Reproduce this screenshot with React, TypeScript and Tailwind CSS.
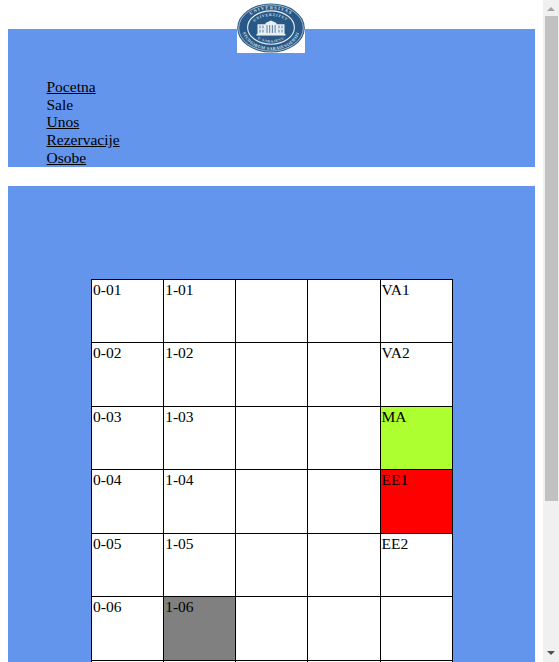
const links = [
  { label: "Pocetna", linked: true },
  { label: "Sale", linked: false },
  { label: "Unos", linked: true },
  { label: "Rezervacije", linked: true },
  { label: "Osobe", linked: true },
];

const rooms = [
  ["0-01", "1-01", "", "", "VA1"],
  ["0-02", "1-02", "", "", "VA2"],
  ["0-03", "1-03", "", "", "MA"],
  ["0-04", "1-04", "", "", "EE1"],
  ["0-05", "1-05", "", "", "EE2"],
  ["0-06", "1-06", "", "", ""],
  ["", "", "", "", ""],
];

const fills: Record<string, string> = {
  MA: "bg-[#adff2f]",
  EE1: "bg-[#ff0000]",
  "1-06": "bg-[#808080]",
};

function Logo() {
  return (
    <svg className="block h-[50px] w-[68px] bg-white" viewBox="0 0 68 51" preserveAspectRatio="none">
      <ellipse cx="34" cy="25.5" rx="33.8" ry="25" fill="#285887" />
      <ellipse cx="34" cy="25.5" rx="32.3" ry="23.6" fill="none" stroke="#dce6ef" strokeWidth="0.7" />
      <ellipse cx="34" cy="25" rx="23.4" ry="17" fill="#285887" stroke="#e8eef4" strokeWidth="1.1" />
      <defs>
        <path id="outerTop" d="M12 13.5 C22 4 46 4 56 13.5" />
        <path id="outerBottom" d="M5 27 C9 55 59 55 63 27" />
        <path id="innerTop" d="M16.5 21 C22 10.8 46 10.8 51.5 21" />
        <path id="innerBottom" d="M19 35 C27 42 41 42 49 35" />
      </defs>
      <g fill="#d5e0ea" fontFamily="Liberation Serif, serif" fontWeight="bold">
        <text fontSize="4.6"><textPath href="#outerTop" startOffset="2" textLength="42">UNIVERSITAS</textPath></text>
        <text fontSize="4.4"><textPath href="#outerBottom" startOffset="3" textLength="71">STUDIORUM SARAIEVOENSIS</textPath></text>
        <text fontSize="3.8"><textPath href="#innerTop" startOffset="2" textLength="34">UNIVERZITET</textPath></text>
        <text fontSize="3.6"><textPath href="#innerBottom" startOffset="2" textLength="28">U SARAJEVU</textPath></text>
      </g>
      <g fill="#e8eff5">
        <path d="M28.5 20.5 34 17.8l5.5 2.7v1.2h8v10.5h-27V21.7h8z" />
        <path d="M19.5 31.5h29v1.7h-29z" />
      </g>
      <path d="M23 23v2.6m3-2.6v2.6m16-2.6v2.6m3-2.6v2.6M23 27.5v2.6m3-2.6v2.6m16-2.6v2.6m3-2.6v2.6M30 22.5v8m2.7-8v8m2.7-8v8m2.7-8v8" stroke="#55799f" strokeWidth="1" />
      <path d="M21 26.5h7m12 0h7" stroke="#b3c7da" strokeWidth="0.6" />
    </svg>
  );
}

function Scrollbar() {
  return (
    <div className="flex h-full w-4 shrink-0 flex-col items-center bg-[#f0f0f0]">
      <svg className="block h-4 w-4 shrink-0" viewBox="0 0 16 16">
        <path d="M4 11 8 7l4 4z" fill="#a3a3a3" />
      </svg>
      <div className="h-[485px] w-[13px] shrink-0 bg-[#c1c1c1]" />
      <div className="grow" />
      <svg className="block h-4 w-4 shrink-0" viewBox="0 0 16 16">
        <path d="M4 5h8L8 9z" fill="#505050" />
      </svg>
    </div>
  );
}

export default function App() {
  return (
    <div className="flex h-[662px] w-[559px] overflow-hidden bg-white font-['Liberation_Serif','Times_New_Roman',serif] text-[15.5px] leading-[17.8px] text-black">
      <main className="flex h-full w-[543px] shrink-0 flex-col px-2">
        <header className="mt-[29px] h-[138px] shrink-0 bg-[#6495ed]">
          <div className="-mt-[26px] ml-[229px] w-[68px]">
            <Logo />
          </div>
          <nav className="ml-[38.5px] mt-[24.9px]">
            {links.map((link) => (
              <div key={link.label} className="h-[17.8px]">
                {link.linked ? <a className="underline" href="#">{link.label}</a> : link.label}
              </div>
            ))}
          </nav>
        </header>
        <section className="mt-[19px] min-h-0 grow overflow-hidden bg-[#6495ed] pl-[83px] pt-[92.5px]">
          <div className="grid w-max auto-rows-[63.6px] grid-cols-[repeat(5,72.15px)] border-l border-t border-black bg-white">
            {rooms.flatMap((row, r) =>
              row.map((name, c) => (
                <div
                  key={`${r}-${c}`}
                  className={`border-b border-r border-black pl-px pt-px ${fills[name] ?? ""}`}
                >
                  {name}
                </div>
              )),
            )}
          </div>
        </section>
      </main>
      <Scrollbar />
    </div>
  );
}
